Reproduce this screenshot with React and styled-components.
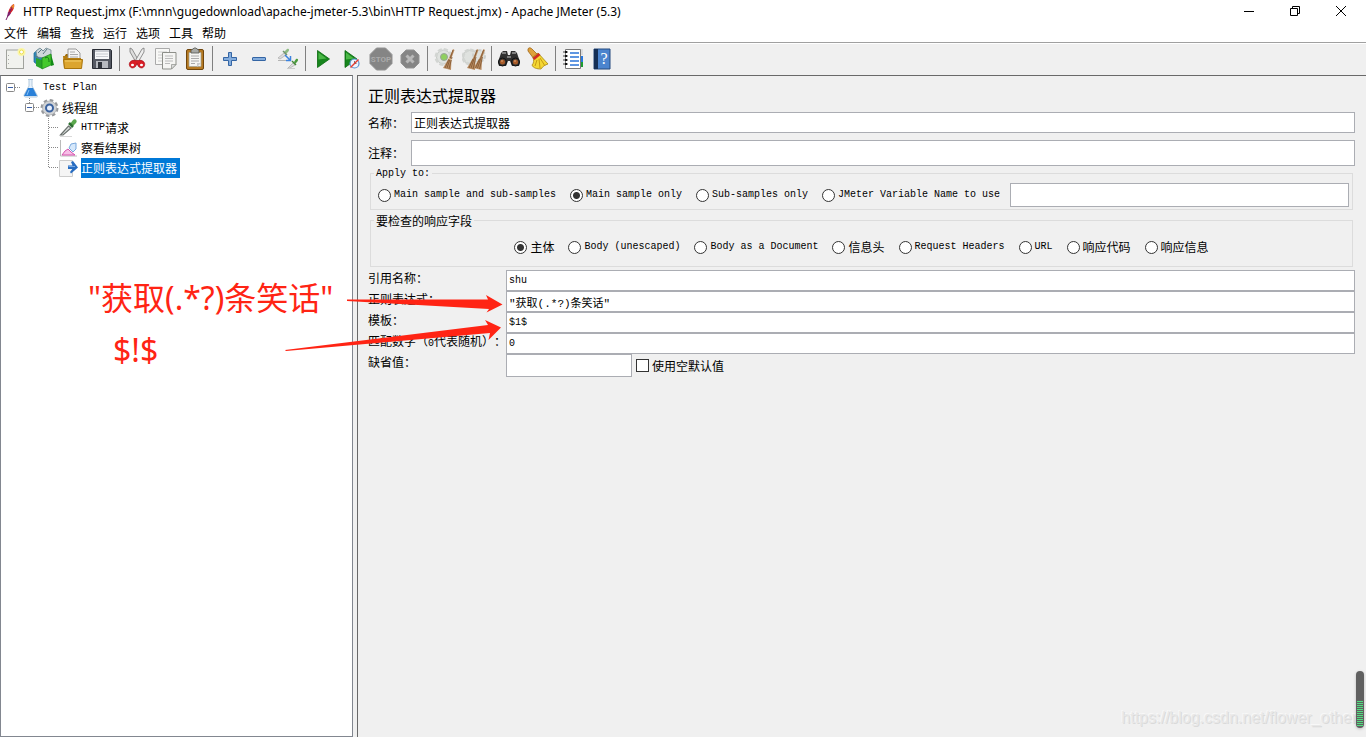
import React from 'react'
import styled, { createGlobalStyle } from 'styled-components'

const GlobalStyle = createGlobalStyle`
  * { box-sizing: border-box; }
  body {
    margin: 0;
    background: #f0f0f0;
    color: #000;
    font: 12px/20px "Noto Sans CJK SC", sans-serif;
    text-spacing-trim: space-all;
  }
  button, input { font: inherit; color: inherit; }
  svg { display: block; flex: none; }
`

/* toolbar icons, all in a 24px box */
const icons = {
  new: <>
    <rect x="3.5" y="3" width="17" height="18.5" fill="#f1f2ee" stroke="#a0a29d" />
    <path d="M5.5 8v1M5.5 12v1M5.5 16v1" stroke="#aaa" />
    <circle cx="18.500" cy="5" r="4" fill="#fbf6a8" /><circle cx="18.500" cy="5" r="2" fill="#fff" stroke="#eede50" />
  </>,
  templates: <>
    <path d="M2 6l5-4 5 2v14l-5 1-5-4z" fill="#2f88b8" stroke="#1c6a92" strokeWidth=".7" />
    <path d="M4 4l4-3 3 3 3-3 5 2v6l-6 2-8-1z" fill="#cfd8dc" stroke="#6f8790" strokeWidth=".8" />
    <path d="M6 6l4-4M11 7l4-5M3 9l3 1v8" stroke="#5c7984" fill="none" />
    <path d="M4 11l6 2v9l-6-3z" fill="#2aa52a" />
    <path d="M10 11l9-4v11l-9 4z" fill="#45c92c" stroke="#188218" strokeWidth=".7" />
    <path d="M19 7l3 11-3 1z" fill="#128a16" /><path d="M13 11c3-2 4 0 4 4" fill="none" stroke="#127516" />
  </>,
  open: <>
    <path d="M3 10l2-3h3l2 3z" fill="#9c6b0b" />
    <path d="M7 2h8l4 4v8H7z" fill="#f5f5f5" stroke="#999" />
    <path d="M9 5h5M9 7.500h8M9 10h8" stroke="#aaa" />
    <path d="M2 9h4l1 2h13v10H3z" fill="#b67e11" />
    <path d="M2.500 12.500h19l-1 9h-17z" fill="#dca52e" stroke="#a8740b" />
    <path d="M4 14h16" stroke="#f3cf6b" />
  </>,
  save: <>
    <path d="M2.500 2.500h18l1 1v18h-19z" fill="#555963" stroke="#292c34" />
    <rect x="5" y="3" width="14" height="9" fill="#f7f8fa" /><path d="M5 4h14" stroke="#9ba0aa" />
    <path d="M6 7h12M6 9.500h12" stroke="#c7cad0" />
    <rect x="6" y="14" width="12" height="7" fill="#b7bac0" /><rect x="8" y="15" width="4" height="6" fill="#30343c" />
  </>,
  cut: <>
    <path d="M5 1l2 1 8 14-3 1L5 5z" fill="#ddd" stroke="#777" strokeWidth=".8" />
    <path d="M19 1l-2 1-8 14 3 1 7-12z" fill="#eee" stroke="#777" strokeWidth=".8" />
    <path d="M10.500 13.500c-4-1-7 2-6 5s4 3 6 1l1.500-3 1.500 3c2 2 5 2 6-1s-2-6-6-5z" fill="#d91d25" stroke="#a60812" strokeWidth=".7" />
    <ellipse cx="7.500" cy="18" rx="1.500" ry="1.200" fill="#fff" /><ellipse cx="16.500" cy="18" rx="1.500" ry="1.200" fill="#fff" />
  </>,
  copy: <>
    <path d="M1.500 1.500h14v16h-14z" fill="#f8f8f6" stroke="#aaa" />
    <path d="M4 5h9M4 8h5M4 11h4M4 14h4" stroke="#ccc" />
    <path d="M8.500 5.500h13.500v12l-4.500 4.500h-9z" fill="#f5f5f3" stroke="#8d8f89" />
    <path d="M11 9h8M11 11.500h8M11 14h8M11 16.500h5" stroke="#bbb" />
    <path d="M17.500 22v-4.500H22z" fill="#ddd" stroke="#8d8f89" strokeWidth=".7" />
  </>,
  paste: <>
    <rect x="3.500" y="2.500" width="17" height="20" rx="1.500" fill="#b67a23" stroke="#70460d" />
    <path d="M6 5.500h12v14H6z" fill="#f5f5f2" stroke="#a5a395" strokeWidth=".7" />
    <path d="M8 9h8M8 11.500h8M8 14h8M8 16.500h4" stroke="#aaa" /><path d="M14 20v-4h4z" fill="#ccc" />
    <path d="M8 6V3l2-1 1-1h2l1 1 2 1v3z" fill="#a8aaa6" stroke="#545650" strokeWidth=".8" />
  </>,
  plus: <path d="M10.500 5.500h3v5h5v3h-5v5h-3v-5h-5v-3h5z" fill="#84addd" stroke="#3465a4" />,
  minus: <rect x="5.500" y="10.500" width="13" height="3" rx=".5" fill="#84addd" stroke="#3465a4" />,
  toggle: <>
    <path d="M2 11l6-5 2 2-6 4z" fill="#ddd" stroke="#aaa" strokeWidth=".7" />
    <path d="M8 5l3-3c2-1 3 1 1 3l-2 2z" fill="#8fbc84" /><path d="M7 4l4 4" stroke="#71946c" strokeWidth="1.500" />
    <path d="M2 13.500h9" stroke="#b4b4b4" /><path d="M9 8l5 5M14.500 9v4.500H10" stroke="#3c83df" strokeWidth="1.500" fill="none" />
    <path d="M12 21l5-5 2 2-5 3z" fill="#ddd" stroke="#aaa" strokeWidth=".7" />
    <path d="M18 15l2-3c2-1 3 1 1 3l-2 2z" fill="#4b9b3d" /><path d="M16 14l4 4" stroke="#448838" strokeWidth="1.500" />
    <path d="M11 21.500h8" stroke="#ccc" />
  </>,
  run: <>
    <path d="M6.500 3.500L18.500 12 6.500 20.500z" fill="#17851d" stroke="#07690c" strokeWidth=".8" />
    <path d="M7.500 5.500l8 6-8 1z" fill="#4bb847" />
  </>,
  runNoTimers: <>
    <path d="M5 3.500L17 12 5 20.500z" fill="#17851d" stroke="#07690c" strokeWidth=".8" />
    <path d="M6 5.500l8 6-8 1z" fill="#4bb847" />
    <circle cx="14.500" cy="16.500" r="4.500" fill="#edf5ff" stroke="#5a94cf" strokeWidth="1.200" />
    <path d="M14.500 14v2.500h2" stroke="#777" fill="none" /><path d="M10.500 20.500l8-8" stroke="#e33c30" strokeWidth="1.500" />
  </>,
  stop: <>
    <path d="M7.500 1h9L23 7.500v9L16.500 23h-9L1 16.500v-9z" fill="#858585" stroke="#929292" />
    <text x="12" y="15" textAnchor="middle" fontFamily="Roboto" fontWeight="bold" fontSize="8" fill="#aaa">STOP</text>
  </>,
  shutdown: <>
    <path d="M8 3h8l5 5v8l-5 5H8l-5-5V8z" fill="#858585" stroke="#939393" />
    <path d="M8.500 8.500l7 7M15.500 8.500l-7 7" stroke="#b8b8b8" strokeWidth="3" />
  </>,
  clear: <>
    <circle cx="10.500" cy="10" r="7" fill="#dfe2df" stroke="#c5c9c5" />
    <circle cx="10.500" cy="10" r="7.500" stroke="#d2d5d2" strokeWidth="3" strokeDasharray="4 1.900" />
    <circle cx="11" cy="10" r="3.500" fill="#8fd05e" stroke="#9aa49a" />
    <path d="M20 2l1.500 1-3 8-.5 12-8-2 6-10z" fill="#b98c61" />
    <path d="M20 3l-6 18M19 10l-3 12M16 12l-4 9" stroke="#80542f" strokeWidth=".8" /><path d="M15 11.500l4 1" stroke="#efd3ad" />
  </>,
  clearAll: <>
    <circle cx="8" cy="10" r="7" fill="#dfe2df" stroke="#c5c9c5" />
    <circle cx="8" cy="10" r="7" stroke="#d2d5d2" strokeWidth="3" strokeDasharray="4 1.500" />
    <circle cx="17" cy="9" r="6" fill="#dfe2df" stroke="#cdd0cd" strokeWidth="2" strokeDasharray="3 1.500" />
    <path d="M15 2l1.500 1-3 8-.5 12-8-2 6-10z" fill="#b98c61" /><path d="M21.500 2l1.500 1-3 8-.5 12-8-2 6-10z" fill="#b98c61" />
    <path d="M15 3L9 21M14 10l-3 12M11 12l-4 9M21.500 3l-6 18M20.500 10l-3 12M17.500 12l-4 9" stroke="#80542f" strokeWidth=".8" />
  </>,
  search: <>
    <path d="M4 6l2-2h4l1 4h2l1-4h4l2 2 3 9-1 4h-7l-2-5h-2l-2 5H2l-1-4z" fill="#303030" />
    <path d="M5 6h4M15 6h4M10 10h4" stroke="#999" strokeWidth="1.500" />
    <circle cx="5.500" cy="15" r="4" fill="#353535" stroke="#111" /><circle cx="18.500" cy="15" r="4" fill="#353535" stroke="#111" />
    <circle cx="5.500" cy="15" r="2.500" fill="#a95b28" /><circle cx="18.500" cy="15" r="2.500" fill="#a95b28" />
    <circle cx="5" cy="14" r=".8" fill="#e9b284" /><circle cx="18" cy="14" r=".8" fill="#e9b284" />
  </>,
  reset: <>
    <path d="M2 2c1-2 3-1 4 0l6 6-4 4-6-8z" fill="#dfa13c" stroke="#9d661a" strokeWidth=".8" />
    <path d="M7 10l5-4 10 11c-3 1-5 2-7 5-4 0-8-1-9-4 2-2 2-5 1-8z" fill="#f4d733" stroke="#a48513" strokeWidth=".8" />
    <path d="M6.500 11l6-5 2 2-6 5z" fill="#cf2d27" /><path d="M11 13l-2 6M13 12l1 9M14 11l5 8" stroke="#c69a14" fill="none" />
  </>,
  functions: <>
    <rect x="18" y="2" width="4" height="6" fill="#ddd" /><rect x="18" y="9" width="4" height="6" fill="#2878e0" /><rect x="18" y="15" width="4" height="5" fill="#1d9c31" />
    <path d="M4.500 2.500h15v19h-15z" fill="#fff" stroke="#777" />
    <path d="M9 6h9M9 10h9M9 14h9M9 18h9" stroke="#2b74d7" strokeWidth="1.500" />
    <path d="M2 5h5M2 9h5M2 13h5M2 17h5" stroke="#444" /><path d="M5 4v2M5 8v2M5 12v2M5 16v2" stroke="#111" strokeWidth="2" />
  </>,
  help: <>
    <path d="M4 2h16v20H4z" fill="#4b84ce" stroke="#264b7e" /><path d="M4 2h4v20H4z" fill="#152f55" />
    <text x="14" y="17" textAnchor="middle" fontFamily="Liberation Serif" fontSize="16" fill="#fff">?</text>
  </>,
}

const groups = [
  ['new', 'templates', 'open', 'save'],
  ['cut', 'copy', 'paste'],
  ['plus', 'minus', 'toggle'],
  ['run', 'runNoTimers', 'stop', 'shutdown'],
  ['clear', 'clearAll'],
  ['search', 'reset'],
  ['functions', 'help'],
]

/* tree icons, 19 x 20 */
const treeIcons = {
  plan: <>
    <path d="M7 1.500h5M8 2v6l-5 9c0 2 1 2 2 2h10c1 0 2 0 1-2L11 8V2" fill="#e7f1fb" stroke="#b4cadd" />
    <path d="M7 10h5l4 8H3z" fill="#2a80d8" /><path d="M6 17l2-5" stroke="#84bff5" />
  </>,
  group: <>
    <circle cx="9.500" cy="10" r="7.500" stroke="#97999c" strokeWidth="3" strokeDasharray="3.400 2.490" />
    <circle cx="9.500" cy="10" r="7" fill="#d2d4d6" stroke="#a5a7aa" strokeWidth=".7" />
    <circle cx="9.500" cy="10" r="3.500" fill="#e6eefb" stroke="#3c639f" strokeWidth="2" />
  </>,
  http: <>
    <path d="M1.500 17l8-9 2.500 2-8 7z" fill="#d8dddb" stroke="#6a706d" strokeWidth="1.200" />
    <path d="M11 6l3-4c2-2 5 1 3 3l-4 4z" fill="#5ba84d" /><path d="M10 5l4 4" stroke="#2e6f31" strokeWidth="2.500" />
    <path d="M1 18.500h12" stroke="#d9d9d9" />
  </>,
  results: <>
    <path d="M1.500 2v16H18" fill="none" stroke="#bbb" />
    <path d="M10 10l2-4 5-1v6l-3 3z" fill="#d6e8fb" stroke="#79a8dd" />
    <path d="M3 17l3-4 3-2 3 3 4 3z" fill="#f7bfe7" stroke="#d653ae" />
  </>,
  extractor: <>
    <path d="M.500 2.500h13v16H.500z" fill="#f5f5f5" stroke="#ccc" />
    <path d="M9 7.500h6V11H9zM12 4l2-1 5 6.500-7 6-1-1.500 3.500-4.500z" fill="#276cc1" />
    <path d="M9.500 8.500H16" stroke="#77a9e5" />
  </>,
}

const tree = [
  { label: 'Test Plan', icon: 'plan', depth: 0, open: true, latin: true },
  { label: '线程组', icon: 'group', depth: 1, open: true },
  { label: '请求', prefix: 'HTTP', icon: 'http', depth: 2 },
  { label: '察看结果树', icon: 'results', depth: 2 },
  { label: '正则表达式提取器', icon: 'extractor', depth: 2, last: true, selected: true },
]

const applyTo = ['Main sample and sub-samples', 'Main sample only', 'Sub-samples only', 'JMeter Variable Name to use']
const fields = ['主体', 'Body (unescaped)', 'Body as a Document', '信息头', 'Request Headers', 'URL', '响应代码', '响应信息']

const isLatin = (text) => /^[\x20-\x7e]+$/.test(text)

const Guide = ({ node }) => (
  <svg width="19" height="20" fill="none" stroke="#888">
    {node.open ? <>
      {node.depth > 0 && <path d="M8.500 0v5" strokeDasharray="1 1" />}
      <path d="M13 9.500h6" strokeDasharray="1 1" />
      <rect x="4.500" y="5.500" width="8" height="8" rx="1" fill="#fff" />
      <path d="M6 9.500h5" stroke="#3a5fa8" />
    </> : <>
      <path d={node.last ? 'M8.500 0v10' : 'M8.500 0v20'} strokeDasharray="1 1" />
      <path d="M9 9.500h10" strokeDasharray="1 1" />
    </>}
  </svg>
)

const RadioGroup = ({ name, options, checked }) => options.map((text) => (
  <Choice key={text}>
    <Radio type="radio" name={name} defaultChecked={text === checked} />
    <Text $latin={isLatin(text)}>{text}</Text>
  </Choice>
))

const App = () => {
  return <Window>
    <GlobalStyle />
    {/* title bar */}
    <TitleBar>
      <svg width="16" height="18" viewBox="0 0 16 18">
        <path d="M12 1c-3 1-5 5-6 9l2 1c3-3 5-7 4-10z" fill="#d22128" />
        <path d="M6 9l3 1c-1 2-2 3-4 4z" fill="#8b2576" /><path d="M12 1c-2 1-3 3-4 5l4-1z" fill="#ef8a28" />
        <path d="M10 4L4 17" stroke="#762069" fill="none" />
      </svg>
      <h1>HTTP Request.jmx (F:\mnn\gugedownload\apache-jmeter-5.3\bin\HTTP Request.jmx) - Apache JMeter (5.3)</h1>
      <WindowButton aria-label="Minimize"><svg width="12" height="12"><path d="M1 5.500h10" stroke="#000" /></svg></WindowButton>
      <WindowButton aria-label="Restore">
        <svg width="12" height="12" fill="none" stroke="#000"><path d="M1.500 2.500h7v7h-7zM3.500 2.500v-2h7v7h-2" /></svg>
      </WindowButton>
      <WindowButton aria-label="Close"><svg width="12" height="12"><path d="M1 0l10 10M11 0L1 10" stroke="#000" /></svg></WindowButton>
    </TitleBar>
    <MenuBar>
      {['文件', '编辑', '查找', '运行', '选项', '工具', '帮助'].map((m) => <button key={m}>{m}</button>)}
    </MenuBar>
    {/* toolbar */}
    <Toolbar>
      {groups.map((group, index) => (
        <React.Fragment key={index}>
          {index > 0 && <Separator />}
          {group.map((name) => (
            <ToolButton key={name} aria-label={name}>
              <svg width="24" height="24" viewBox="0 0 24 24" fill="none">{icons[name]}</svg>
            </ToolButton>
          ))}
        </React.Fragment>
      ))}
    </Toolbar>

    <Workspace>
      {/* test plan tree */}
      <Tree>
        {tree.map((node) => (
          <TreeRow key={node.label} $depth={node.depth}>
            <Guide node={node} />
            <svg width="19" height="20" viewBox="0 0 19 20" fill="none">{treeIcons[node.icon]}</svg>
            <TreeLabel $selected={node.selected}>
              {node.prefix && <Text $latin>{node.prefix}</Text>}
              <Text $latin={node.latin}>{node.label}</Text>
            </TreeLabel>
          </TreeRow>
        ))}
      </Tree>

      {/* extractor settings */}
      <Panel>
        <h2>正则表达式提取器</h2>
        <NameRow>
          <label htmlFor="name">名称：</label>
          <Field id="name" defaultValue="正则表达式提取器" $height={21} />
        </NameRow>
        <NameRow>
          <label htmlFor="comment">注释：</label>
          <Field id="comment" $height={26} />
        </NameRow>
        <Group>
          <legend><Text $latin>Apply to:</Text></legend>
          <ApplyRow>
            <RadioGroup name="apply" options={applyTo} checked="Main sample only" />
            <Field aria-label="JMeter Variable Name" $height={24} />
          </ApplyRow>
        </Group>
        <Group $spaced>
          <legend>要检查的响应字段</legend>
          <FieldRow>
            <RadioGroup name="field" options={fields} checked="主体" />
          </FieldRow>
        </Group>
        <Params>
          <label htmlFor="ref">引用名称：</label>
          <Field id="ref" defaultValue="shu" $height={21} $size={10} />
          <label htmlFor="regex">正则表达式：</label>
          <Field id="regex" defaultValue={'"获取(.*?)条笑话"'} $height={21} $size={11} />
          <label htmlFor="template">模板：</label>
          <Field id="template" defaultValue="$1$" $height={21} $size={10} />
          <label htmlFor="match">匹配数字（<Text $latin>0</Text>代表随机）：</label>
          <Field id="match" defaultValue="0" $height={21} $size={10} />
          <label htmlFor="default">缺省值：</label>
          <DefaultRow>
            <Field id="default" $height={23} />
            <Choice>
              <CheckBox type="checkbox" />
              使用空默认值
            </Choice>
          </DefaultRow>
        </Params>
      </Panel>
    </Workspace>

    {/* red notes over the window */}
    <Arrows width="520" height="360" fill="#ff2414">
      <path d="M347 299.500L488 299.500L486 295L502.500 304.500L486.500 312.500L489 309L347 301z" />
      <path d="M285 350L488 325L485 320L501 327.500L488.500 340L490 333L286 351z" />
    </Arrows>
    <Note $top={274} $left={88}>"获取(.*?)条笑话"</Note>
    <Note $top={326} $left={113}>$!$</Note>
    <Watermark>https://blog.csdn.net/flower_other</Watermark>
    <Meter />
  </Window>
}

const Window = styled.main`
  position: relative;
  height: 100vh;
  display: flex;
  flex-direction: column;
  overflow: hidden;
`

const TitleBar = styled.header`
  height: 23px;
  padding: 0 2px;
  display: flex;
  align-items: center;
  background: #fff;
  h1 {
    flex: 1;
    margin: 0 0 0 5px;
    font: 12px/23px "Noto Sans", sans-serif;
    white-space: nowrap;
  }
`

const WindowButton = styled.button`
  width: 46px;
  height: 20px;
  padding: 0;
  display: flex;
  align-items: center;
  justify-content: center;
  border: none;
  background: transparent;
`

const MenuBar = styled.nav`
  height: 20px;
  padding-left: 4px;
  display: flex;
  gap: 9px;
  background: #fff;
  border-bottom: 1px solid #a0a0a0;
  button {
    padding: 0;
    border: none;
    background: transparent;
    line-height: 18px;
  }
`

const Toolbar = styled.div`
  height: 32px;
  padding-bottom: 2px;
  display: flex;
  align-items: center;
  border-top: 1px solid #fff;
`

const ToolButton = styled.button`
  width: 29px;
  height: 29px;
  padding: 0;
  display: flex;
  align-items: center;
  justify-content: center;
  border: none;
  background: transparent;
`

const Separator = styled.div`
  width: 1px;
  height: 25px;
  margin: 0 2px 0 3px;
  background: #808080;
`

const Workspace = styled.div`
  flex: 1;
  display: grid;
  grid-template-columns: 353px 1fr;
  gap: 4px;
`

const Tree = styled.ul`
  margin: 0;
  padding: 2px 0 0 1px;
  list-style: none;
  background: #fff;
  border: 1px solid #828790;
  border-top-color: #696969;
`

const TreeRow = styled.li`
  height: 20px;
  padding-left: ${(p) => p.$depth * 19}px;
  display: flex;
`

const TreeLabel = styled.span`
  margin-left: 3px;
  padding-right: 3px;
  display: flex;
  background: ${(p) => (p.$selected ? '#0078d7' : 'transparent')};
  color: ${(p) => (p.$selected ? '#fff' : '#000')};
`

const Text = styled.span`
  ${(p) => p.$latin && 'font-family: "Liberation Mono", monospace; font-size: 10px;'}
`

const Panel = styled.section`
  padding: 9px 11px 0 10px;
  border-left: 1px solid #696969;
  border-top: 1px solid #696969;
  h2 {
    margin: 0 0 7px;
    font-size: 16px;
    font-weight: normal;
    line-height: 20px;
  }
`

const NameRow = styled.div`
  display: grid;
  grid-template-columns: 36px 1fr;
  align-items: center;
  gap: 7px;
  & + & { margin-top: 7px; }
`

const Field = styled.input`
  width: 100%;
  min-width: 0;
  height: ${(p) => p.$height}px;
  padding: 0 2px;
  background: #fff;
  border: 1px solid #abadb3;
  outline: none;
  font-size: ${(p) => p.$size || 12}px;
  font-family: "Liberation Mono", "Noto Sans CJK SC", monospace;
`

const Group = styled.fieldset`
  min-width: 0;
  margin: ${(p) => (p.$spaced ? 3 : 0)}px 2px 0;
  padding: 0 3px;
  border: 1px solid #dcdcdc;
  legend {
    padding: 2px 2px 0;
    line-height: 12px;
    height: 14px;
  }
  legend > span { display: block; }
`

const ApplyRow = styled.div`
  padding: 3px 0 2px 4px;
  display: flex;
  align-items: center;
  gap: 14px;
  & > input {
    flex: 1;
    margin-left: -4px;
  }
`

const FieldRow = styled.div`
  padding: 10px 0 9px;
  display: flex;
  justify-content: center;
  gap: 14px;
`

const Choice = styled.label`
  display: flex;
  align-items: center;
  gap: 3px;
  white-space: nowrap;
`

const Radio = styled.input`
  appearance: none;
  width: 13px;
  height: 13px;
  margin: 0;
  border: 1px solid #333;
  border-radius: 50%;
  background: #fff;
  &:checked { background: radial-gradient(circle, #333 0 3px, #fff 4px); }
`

const CheckBox = styled.input`
  appearance: none;
  width: 13px;
  height: 13px;
  margin: 0;
  border: 1px solid #333;
  background: #fff;
`

const Params = styled.div`
  margin-top: 3px;
  display: grid;
  grid-template-columns: 138px 1fr;
  & > label {
    line-height: 16px;
    white-space: nowrap;
  }
`

const DefaultRow = styled.div`
  display: flex;
  gap: 4px;
  & > input { width: 126px; }
`

const Arrows = styled.svg`
  position: absolute;
  top: 0;
  left: 0;
  pointer-events: none;
`

const Note = styled.div`
  position: absolute;
  top: ${(p) => p.$top}px;
  left: ${(p) => p.$left}px;
  color: #ff2414;
  font: 32px/48px "Noto Sans", "Noto Sans CJK SC", sans-serif;
  white-space: nowrap;
`

const Watermark = styled.div`
  position: absolute;
  right: 9px;
  bottom: 9px;
  color: #e8e8e8;
  font: 16px/20px "Liberation Sans", sans-serif;
  text-shadow: 1px 1px 0 #dadada, -1px -1px 0 #f8f8f8;
`

const Meter = styled.div`
  position: absolute;
  right: 2px;
  bottom: 9px;
  width: 8px;
  height: 57px;
  padding: 30px 1px 2px;
  border-radius: 4px;
  background: #606060;
  box-shadow: 0 1px 3px #bbb;
  &::after {
    content: '';
    display: block;
    height: 25px;
    background: repeating-linear-gradient(#50e080 0 1px, #606060 1px 2px);
  }
`

export default App
